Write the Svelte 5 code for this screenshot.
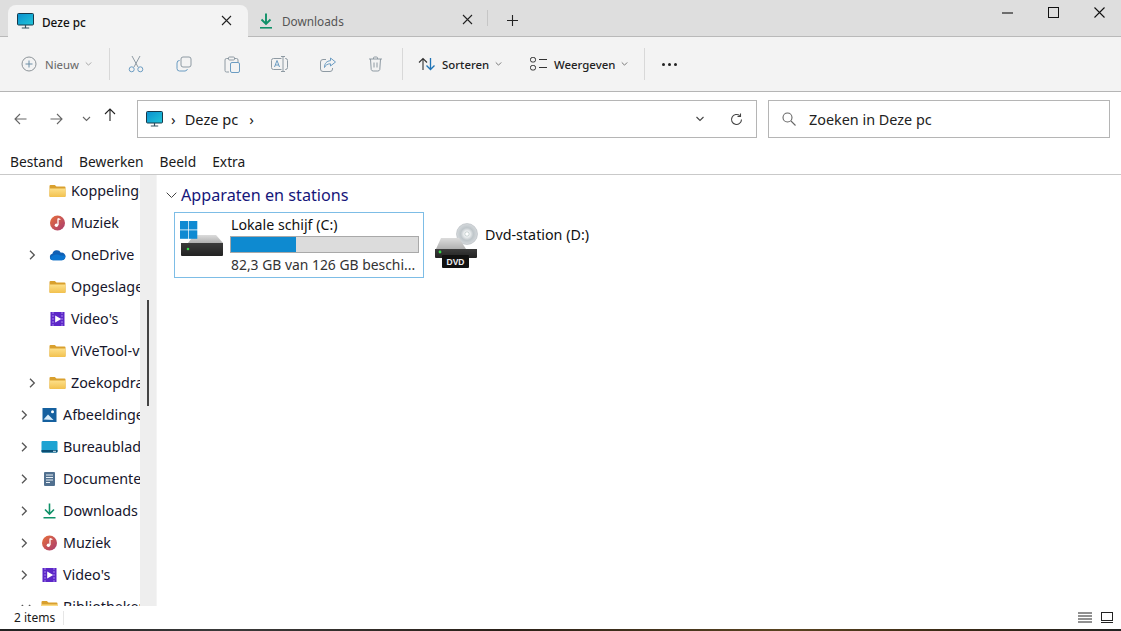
<script>
  const tree = [
    { label: 'Koppelingen', icon: 'folder', level: 2 },
    { label: 'Muziek', icon: 'music', level: 2 },
    { label: 'OneDrive', icon: 'cloud', level: 2, arrow: true },
    { label: 'Opgeslagen games', icon: 'folder', level: 2 },
    { label: "Video's", icon: 'video', level: 2 },
    { label: 'ViVeTool-v0.3', icon: 'folder', level: 2 },
    { label: 'Zoekopdrachten', icon: 'folder', level: 2, arrow: true },
    { label: 'Afbeeldingen', icon: 'pictures', level: 1, arrow: true },
    { label: 'Bureaublad', icon: 'desktop', level: 1, arrow: true },
    { label: 'Documenten', icon: 'docs', level: 1, arrow: true },
    { label: 'Downloads', icon: 'download', level: 1, arrow: true },
    { label: 'Muziek', icon: 'music', level: 1, arrow: true },
    { label: "Video's", icon: 'video', level: 1, arrow: true },
    { label: 'Bibliotheken', icon: 'folder', level: 1, open: true }
  ]
  const menu = ['Bestand', 'Bewerken', 'Beeld', 'Extra']
  let free = $state(82.3)
  let total = $state(126)
  let fill = $derived(((total - free) / total) * 100)
</script>

{#snippet monitor()}
  <svg width="17" height="16" viewBox="0 0 17 16">
    <rect x="0.5" y="0.5" width="16" height="11.5" rx="1" fill="url(#scr)" stroke="#17384a" />
    <path d="M8.5 12v2.6M4.8 15h7.4" stroke="#33505f" stroke-width="1.2" />
  </svg>
{/snippet}

{#snippet dl(w, h)}
  <svg width={w} height={h} viewBox="0 0 14 16">
    <path d="M7 0.5v10M2.5 6.5 7 11l4.5-4.5" fill="none" stroke="#0f9168" stroke-width="1.9" />
    <path d="M1 14.8h12" stroke="#0f9168" stroke-width="1.6" />
  </svg>
{/snippet}

{#snippet x()}
  <svg width="11" height="11" viewBox="0 0 11 11"><path d="M1 1l9 9M10 1l-9 9" stroke="#222" stroke-width="1.1" fill="none" /></svg>
{/snippet}

{#snippet chev(w = 9, color = '#777')}
  <svg width={w} height="6" viewBox="0 0 9 6"><path d="M1 1l3.5 3.5L8 1" fill="none" stroke={color} stroke-width="1.1" /></svg>
{/snippet}

{#snippet side(name)}
  <svg width="17" height="16" viewBox="0 0 17 16">
    {#if name === 'folder'}
      <path d="M0.5 3a1 1 0 0 1 1-1h4.300l1.700 1.600h8a1 1 0 0 1 1 1V13a1 1 0 0 1-1 1h-14a1 1 0 0 1-1-1z" fill="#d9a02e" />
      <path d="M0.5 5.500h16V13a1 1 0 0 1-1 1h-14a1 1 0 0 1-1-1z" fill="url(#fld)" />
    {:else if name === 'music'}
      <circle cx="8.500" cy="8" r="7.500" fill="url(#mus)" />
      <path d="M9 3.600v6.300M9 3.600l2.400.9" stroke="#fff" stroke-width="1.300" fill="none" />
      <circle cx="7.400" cy="10.200" r="1.700" fill="#fff" />
    {:else if name === 'cloud'}
      <path d="M4 13.200a3.300 3.300 0 0 1-.6-6.500 4.600 4.600 0 0 1 8.500-1 3.800 3.800 0 0 1 4.600 3.700c0 2.200-1.600 3.800-3.600 3.800z" fill="#0f5fb4" />
      <path d="M1 11.500c1-2.600 5-5 9-3.600 2.500.9 5 .3 6.400 1-.2 2.400-1.800 4.300-3.900 4.300H4C2.600 13.200 1.600 12.500 1 11.500z" fill="#0a74d0" />
    {:else if name === 'video'}
      <rect x="1.500" y="1" width="14" height="14" fill="#5c27c7" />
      <path d="M4 1v14M13 1v14" stroke="#a583ee" stroke-width="1" stroke-dasharray="2 1" />
      <path d="M6.200 4.500l6 3.500-6 3.500z" fill="#fff" />
    {:else if name === 'pictures'}
      <rect x="1.500" y="1" width="14" height="14" fill="#15609f" />
      <circle cx="11.500" cy="4.800" r="1.500" fill="#fff" />
      <path d="M2.500 12.500 7 7.500l5.500 5.500z" fill="#d8ecfa" />
    {:else if name === 'desktop'}
      <rect x="0.500" y="2" width="16" height="11.500" rx="1" fill="#1da3d2" />
      <path d="M0.500 11h16v1.500a1 1 0 0 1-1 1h-14a1 1 0 0 1-1-1z" fill="#0b4e73" />
      <path d="M12 12.300h3" stroke="#cfe6f1" />
    {:else if name === 'docs'}
      <rect x="3" y="1" width="11" height="14" rx="1" fill="#51708f" />
      <path d="M5 4h7M5 6.500h7M5 9h7M5 11.500h4" stroke="#e9f0f6" stroke-width="1" />
    {:else if name === 'download'}
      <svg x="1.500" width="14" height="16" viewBox="0 0 14 16">
        <path d="M7 0.500v10M2.500 6.500 7 11l4.500-4.500" fill="none" stroke="#0f9168" stroke-width="1.600" />
        <path d="M1 14.800h12" stroke="#0f9168" stroke-width="1.500" />
      </svg>
    {/if}
  </svg>
{/snippet}

<svg class="defs" width="0" height="0" aria-hidden="true">
  <defs>
    <linearGradient id="scr" x1="0" y1="0" x2="1" y2="1"><stop offset="0" stop-color="#0a8fcf" /><stop offset="1" stop-color="#22c6d8" /></linearGradient>
    <linearGradient id="fld" x1="0" y1="0" x2="0" y2="1"><stop offset="0" stop-color="#fde08a" /><stop offset="1" stop-color="#f2c14e" /></linearGradient>
    <linearGradient id="mus" x1="0" y1="0" x2="1" y2="1"><stop offset="0" stop-color="#e8703a" /><stop offset="1" stop-color="#a83a70" /></linearGradient>
    <linearGradient id="drv" x1="0" y1="0" x2="0" y2="1"><stop offset="0" stop-color="#dcdcdc" /><stop offset="1" stop-color="#b0b0b0" /></linearGradient>
    <linearGradient id="blk" x1="0" y1="0" x2="0" y2="1"><stop offset="0" stop-color="#3c3c3c" /><stop offset="1" stop-color="#222" /></linearGradient>
    <radialGradient id="disc"><stop offset="0.25" stop-color="#f2f4f5" /><stop offset="0.6" stop-color="#bfc6ca" /><stop offset="1" stop-color="#d6dadd" /></radialGradient>
  </defs>
</svg>

<div class="window">
  <header class="titlebar">
    <div class="tab active">
      <span class="tab-icon">{@render monitor()}</span>
      <span class="tab-label">Deze pc</span>
      <span class="tab-x">{@render x()}</span>
    </div>
    <div class="tab">
      <span class="tab-icon dl">{@render dl(14, 16)}</span>
      <span class="tab-label">Downloads</span>
      <span class="tab-x">{@render x()}</span>
    </div>
    <span class="tab-sep"></span>
    <span class="plus">
      <svg width="11" height="11" viewBox="0 0 11 11"><path d="M5.500 0v11M0 5.500h11" stroke="#222" stroke-width="1.100" /></svg>
    </span>
    <div class="win-buttons">
      <span><svg width="11" height="11" viewBox="0 0 11 11"><path d="M0 6h11" stroke="#111" stroke-width="1.100" /></svg></span>
      <span><svg width="11" height="11" viewBox="0 0 11 11"><rect x="0.500" y="0.500" width="10" height="10" fill="none" stroke="#111" /></svg></span>
      <span><svg width="11" height="11" viewBox="0 0 11 11"><path d="M0.500 0.500l10 10M10.500 0.500l-10 10" stroke="#111" stroke-width="1.100" /></svg></span>
    </div>
  </header>

  <div class="toolbar">
    <div class="new">
      <svg width="16" height="16" viewBox="0 0 16 16"><circle cx="8" cy="8" r="7" fill="none" stroke="#8d9499" /><path d="M8 4.500v7M4.500 8h7" stroke="#6d8ea6" /></svg>
      <span>Nieuw</span>
      {@render chev(7, '#999')}
    </div>
    <span class="sep"></span>
    <div class="actions">
      <svg width="16" height="18" viewBox="0 0 16 18"><path d="M4 1l6 11M12 1L6 12" fill="none" stroke="#8e9aa3" /><circle cx="3.700" cy="14.300" r="2.500" fill="none" stroke="#6b9cc2" /><circle cx="12.300" cy="14.300" r="2.500" fill="none" stroke="#6b9cc2" /></svg>
      <svg width="16" height="16" viewBox="0 0 16 16"><rect x="5" y="1" width="10" height="10" rx="2" fill="none" stroke="#8e9aa3" /><path d="M3.600 4.500A2.500 2.500 0 0 0 1 7v5.500A2.500 2.500 0 0 0 3.500 15H9a2.500 2.500 0 0 0 2.400-2" fill="none" stroke="#6b9cc2" /></svg>
      <svg width="16" height="17" viewBox="0 0 16 17"><path d="M4 2.500H2.500A1.500 1.500 0 0 0 1 4v10.500A1.500 1.500 0 0 0 2.500 16H5M11 2.500h1.500A1.500 1.500 0 0 1 14 4v2" fill="none" stroke="#8e9aa3" /><rect x="4.500" y="1" width="6" height="3" rx="1" fill="none" stroke="#8e9aa3" /><rect x="6.500" y="6.500" width="9" height="10" rx="1.500" fill="none" stroke="#6b9cc2" /></svg>
      <svg width="17" height="16" viewBox="0 0 17 16"><path d="M10.500 2.500h-8a2 2 0 0 0-2 2v7a2 2 0 0 0 2 2h8M14 2.500h.5a2 2 0 0 1 2 2v7a2 2 0 0 1-2 2H14M10 .5h4M10 15.500h4M12 .5v15" fill="none" stroke="#8e9aa3" /><path d="M3.500 11l2.500-6.500L8.500 11M4.300 9h3.400" fill="none" stroke="#6b9cc2" /></svg>
      <svg width="16" height="15" viewBox="0 0 16 15"><path d="M6 2.500H3A2.500 2.500 0 0 0 .5 5v7A2.500 2.500 0 0 0 3 14.500h7a2.500 2.500 0 0 0 2.500-2.500v-1" fill="none" stroke="#8e9aa3" /><path d="M10.500 1l5 4-5 4V6.800C7.500 6.800 5.500 8 4.500 10.500c0-4 2-6.500 6-6.800z" fill="none" stroke="#6b9cc2" /></svg>
      <svg width="15" height="16" viewBox="0 0 15 16"><path d="M1 3h13M5.500 3V2a1 1 0 0 1 1-1h2a1 1 0 0 1 1 1v1M2.500 3l.7 10.500a2 2 0 0 0 2 1.500h4.600a2 2 0 0 0 2-1.500L12.500 3M6 6.500v5M9 6.500v5" fill="none" stroke="#8e9aa3" /></svg>
    </div>
    <span class="sep"></span>
    <div class="tool sort">
      <svg width="18" height="14" viewBox="0 0 18 14"><path d="M5 13V1.500M1 5.500l4-4 4 4" fill="none" stroke="#333" stroke-width="1.100" /><path d="M12.500 1v11.500M8.500 8.500l4 4 4-4" fill="none" stroke="#1e73b5" stroke-width="1.300" /></svg>
      <span>Sorteren</span>
      {@render chev(7, '#666')}
    </div>
    <div class="tool view">
      <svg width="17" height="14" viewBox="0 0 17 14"><rect x="0.500" y="0.500" width="5" height="4.500" rx="1.800" fill="none" stroke="#333" /><rect x="0.500" y="8.500" width="5" height="4.500" rx="1.800" fill="none" stroke="#333" /><path d="M9 2.500h8M9 10.500h8" stroke="#333" /></svg>
      <span>Weergeven</span>
      {@render chev(7, '#666')}
    </div>
    <span class="sep last"></span>
    <div class="dots"><i></i><i></i><i></i></div>
  </div>

  <div class="addressrow">
    <div class="nav">
      <svg width="13" height="12" viewBox="0 0 13 12"><path d="M12.500 6H1M6 1 1 6l5 5" fill="none" stroke="#666" stroke-width="1.100" /></svg>
      <svg class="fwd" width="13" height="12" viewBox="0 0 13 12"><path d="M.5 6H12M7 1l5 5-5 5" fill="none" stroke="#666" stroke-width="1.100" /></svg>
      <span class="hist">{@render chev(9, '#666')}</span>
      <svg class="up" width="12" height="13" viewBox="0 0 12 13"><path d="M6 13V1M1 6l5-5 5 5" fill="none" stroke="#222" stroke-width="1.100" /></svg>
    </div>
    <div class="address">
      {@render monitor()}
      <span class="crumb-sep first">›</span>
      <span class="crumb">Deze pc</span>
      <span class="crumb-sep">›</span>
      <span class="grow"></span>
      {@render chev(10, '#444')}
      <svg class="refresh" width="13" height="13" viewBox="0 0 13 13"><path d="M11.500 6.500A5 5 0 1 1 9.800 2.700" fill="none" stroke="#444" stroke-width="1.100" /><path d="M10.500.5v3h-3" fill="none" stroke="#444" stroke-width="1.100" /></svg>
    </div>
    <div class="search">
      <svg width="14" height="14" viewBox="0 0 14 14"><circle cx="5.500" cy="5.500" r="4.500" fill="none" stroke="#666" stroke-width="1.100" /><path d="M9 9l4.500 4.500" stroke="#666" stroke-width="1.100" /></svg>
      <span>Zoeken in Deze pc</span>
    </div>
  </div>

  <nav class="menubar">
    {#each menu as item}
      <span>{item}</span>
    {/each}
  </nav>

  <div class="body">
    <aside class="tree">
      {#each tree as row}
        <div class="row" class:l2={row.level === 2}>
          <span class="arrow">
            {#if row.arrow}
              <svg width="7" height="10" viewBox="0 0 7 10"><path d="M1 .8 5.300 5 1 9.200" fill="none" stroke="#555" stroke-width="1.300" /></svg>
            {:else if row.open}
              <svg width="10" height="7" viewBox="0 0 10 7"><path d="M.8 1 5 5.300 9.200 1" fill="none" stroke="#555" stroke-width="1.300" /></svg>
            {/if}
          </span>
          {@render side(row.icon)}
          <span class="row-label">{row.label}</span>
        </div>
      {/each}
    </aside>
    <div class="scroll"><span class="thumb"></span></div>

    <main class="content">
      <h2>
        <svg width="11" height="7" viewBox="0 0 11 7"><path d="M.7.700l4.800 4.800L10.300.7" fill="none" stroke="#444" stroke-width="1" /></svg>
        Apparaten en stations
      </h2>
      <div class="drives">
        <div class="drive selected">
          <svg class="hdd" width="44" height="36" viewBox="0 0 44 36">
            <path d="M8 22 14 14h22l7 8z" fill="url(#drv)" />
            <g fill="#0f8ad2">
              <rect x="0" y="0" width="8.300" height="8.500" /><rect x="9" y="0" width="8.300" height="8.500" />
              <rect x="0" y="9.300" width="8.300" height="8.500" /><rect x="9" y="9.300" width="8.300" height="8.500" />
            </g>
            <path d="M1 22h42v12a1 1 0 0 1-1 1H2a1 1 0 0 1-1-1z" fill="url(#blk)" />
            <circle cx="8" cy="28" r="1.300" fill="#38d84a" />
          </svg>
          <div class="drive-info">
            <div class="drive-name">Lokale schijf (C:)</div>
            <div class="bar"><span style="width: {fill}%"></span></div>
            <div class="drive-size">{String(free).replace('.', ',')} GB van {total} GB beschi...</div>
          </div>
        </div>
        <div class="drive dvd">
          <svg width="44" height="47" viewBox="0 0 44 47">
            <circle cx="33" cy="12" r="10.500" fill="url(#disc)" stroke="#b3b9bd" stroke-width="0.600" />
            <circle cx="33" cy="12" r="2.200" fill="#fff" stroke="#99aaaa" stroke-width="0.500" />
            <path d="M2 27 7 16h18l7 11z" fill="url(#drv)" />
            <path d="M1 27h42v8a1 1 0 0 1-1 1H2a1 1 0 0 1-1-1z" fill="url(#blk)" />
            <circle cx="6" cy="30" r="1.400" fill="#38d84a" />
            <rect x="8" y="33" width="27" height="13" rx="1" fill="#111" />
            <text x="21.500" y="42.500" text-anchor="middle" font-size="8.500" font-weight="700" fill="#eee" font-family="Liberation Sans, sans-serif">DVD</text>
          </svg>
          <div class="drive-name">Dvd-station (D:)</div>
        </div>
      </div>
    </main>
  </div>

  <footer class="status">
    <span class="count">2 items</span>
    <span class="count-sep"></span>
    <span class="grow"></span>
    <svg width="14" height="11" viewBox="0 0 14 11"><path d="M0 1h14M0 4h14M0 7h14M0 10h14" stroke="#222" /></svg>
    <svg width="12" height="11" viewBox="0 0 12 11"><rect x="0.500" y="0.500" width="11" height="8" fill="none" stroke="#222" /><path d="M0 10.500h12" stroke="#222" /></svg>
  </footer>
  <div class="strip"></div>
</div>

<style>
  :global(body) {
    margin: 0;
    background: #fff;
  }

  .defs {
    position: absolute;
  }

  .window {
    display: flex;
    flex-direction: column;
    width: 1121px;
    height: 631px;
    overflow: hidden;
    font-family: 'Noto Sans', 'Open Sans', sans-serif;
    color: #1a1a1a;
  }

  svg {
    display: block;
    flex: none;
  }

  .grow {
    flex: 1;
  }

  .titlebar {
    display: flex;
    align-items: flex-end;
    box-sizing: border-box;
    height: 37px;
    padding-left: 8px;
    background: #dedede;
    border-bottom: 1px solid #b9b9b9;
  }

  .tab {
    display: flex;
    align-items: center;
    box-sizing: border-box;
    width: 240px;
    height: 31px;
    padding-left: 9px;
    font-size: 11.8px;
    color: #555;
  }

  .tab.active {
    margin-bottom: -1px;
    height: 32px;
    border-radius: 8px 8px 0 0;
    background: #f3f3f3;
    color: #111;
    font-weight: 500;
  }

  .tab.active .tab-x {
    margin-left: auto;
    margin-right: 16px;
  }

  .tab-label {
    margin-top: 1px;
  }

  .tab-icon {
    width: 25px;
  }

  .tab-icon.dl {
    margin-left: 2px;
    width: 23px;
  }

  .tab-x {
    margin-left: auto;
    margin-right: 15px;
    margin-top: -2px;
  }

  .tab-sep {
    width: 1px;
    height: 16px;
    margin: 0 19px 10px -1px;
    background: #c6c6c6;
  }

  .plus {
    margin-bottom: 10px;
  }

  .win-buttons {
    display: flex;
    align-self: flex-start;
    gap: 35px;
    margin-left: auto;
    margin-right: 16px;
    padding-top: 7px;
  }

  .toolbar {
    display: flex;
    align-items: center;
    box-sizing: border-box;
    height: 55px;
    background: #f3f3f3;
    border-bottom: 1px solid #b5b5b5;
  }

  .new {
    display: flex;
    align-items: center;
    width: 109px;
    padding-left: 21px;
    box-sizing: border-box;
    font-size: 11.4px;
    color: #666;
  }

  .new span {
    margin: 0 6px 0 8px;
  }

  .sep {
    width: 1px;
    height: 32px;
    background: #d8d8d8;
  }

  .actions {
    display: flex;
    align-items: center;
    justify-content: space-between;
    width: 292px;
    box-sizing: border-box;
    padding: 0 19px 0 18px;
  }

  .tool {
    display: flex;
    align-items: center;
    font-size: 11.4px;
    font-weight: 500;
    color: #222;
  }

  .tool span {
    margin: 0 6px 0 6px;
  }

  .sort {
    margin-left: 15px;
    width: 112px;
  }

  .view {
    width: 115px;
  }

  .view span {
    margin-left: 7px;
  }

  .sep.last {
    margin-left: -1px;
  }

  .dots {
    display: flex;
    gap: 3px;
    margin-left: 17px;
  }

  .dots i {
    width: 3px;
    height: 3px;
    border-radius: 50%;
    background: #222;
  }

  .addressrow {
    display: flex;
    align-items: center;
    box-sizing: border-box;
    height: 56px;
    background: #fff;
    padding-bottom: 2px;
  }

  .nav {
    display: flex;
    align-items: center;
    width: 137px;
    box-sizing: border-box;
    padding-left: 14px;
  }

  .fwd {
    margin-left: 23px;
  }

  .hist {
    margin-left: 19px;
  }

  .nav .up {
    margin: -10px 0 0 13px;
  }

  .address,
  .search {
    display: flex;
    align-items: center;
    box-sizing: border-box;
    height: 38px;
    border: 1px solid #b5b5b5;
    background: #fff;
  }

  .address {
    width: 620px;
    padding: 0 13px 0 8px;
    margin-right: 11px;
  }

  .crumb {
    font-size: 14.6px;
    color: #1a1a1a;
    margin: 0 11px 0 9px;
  }

  .crumb-sep {
    font-size: 15px;
    color: #222;
  }

  .crumb-sep.first {
    margin-left: 8px;
  }

  .refresh {
    margin-left: 25px;
  }

  .search {
    width: 342px;
    padding-left: 13px;
    font-size: 14.4px;
    color: #222;
    gap: 13px;
  }

  .menubar {
    display: flex;
    gap: 16px;
    box-sizing: border-box;
    height: 27px;
    padding: 5px 0 0 10px;
    font-size: 13.8px;
    line-height: 18px;
    border-bottom: 1px solid #c9c9c9;
  }

  .body {
    display: flex;
    height: 431px;
    overflow: hidden;
  }

  .tree {
    width: 140px;
    overflow: hidden;
    flex: none;
  }

  .row {
    display: flex;
    align-items: center;
    height: 32px;
    font-size: 14.3px;
    white-space: nowrap;
    color: #16162c;
    padding-left: 21px;
  }

  .row.l2 {
    padding-left: 29px;
  }

  .arrow {
    display: flex;
    width: 20px;
    flex: none;
  }

  .row-label {
    margin: 0 0 1px 5px;
  }

  .scroll {
    flex: none;
    width: 16px;
    background: #eeeeee;
    border-right: 1px solid #f4f4f4;
    display: flex;
    justify-content: center;
  }

  .thumb {
    width: 2px;
    height: 106px;
    margin-top: 125px;
    background: #444;
  }

  .content {
    flex: 1;
    padding: 8px 0 0 9px;
  }

  h2 {
    display: flex;
    align-items: center;
    gap: 4px;
    margin: 0;
    font-size: 16.2px;
    font-weight: 400;
    line-height: 24px;
    color: #16167a;
  }

  .drives {
    display: flex;
    align-items: center;
    gap: 10px;
    margin: 5px 0 0 8px;
  }

  .drive {
    display: flex;
    align-items: center;
    box-sizing: border-box;
  }

  .selected {
    width: 250px;
    height: 66px;
    padding-left: 5px;
    gap: 7px;
    border: 1px solid #7dbde6;
  }

  .hdd {
    align-self: flex-start;
    margin-top: 8px;
  }

  .dvd {
    gap: 7px;
    align-items: flex-start;
    height: 47px;
  }

  .dvd .drive-name {
    margin-top: 3px;
    font-size: 14.3px;
  }

  .drive-info {
    width: 188px;
    margin-top: -1px;
  }

  .drive-name {
    font-size: 14.2px;
    line-height: 20px;
    color: #111;
  }

  .bar {
    box-sizing: border-box;
    height: 17px;
    margin: 1px 0 2px -1px;
    border: 1px solid #a9a9a9;
    background: #dcdcdc;
  }

  .bar span {
    display: block;
    height: 100%;
    background: #0e8ad0;
  }

  .drive-size {
    font-size: 13.9px;
    line-height: 20px;
    color: #333;
    white-space: nowrap;
  }

  .status {
    display: flex;
    align-items: center;
    box-sizing: border-box;
    height: 23px;
    gap: 9px;
    padding: 0 8px 0 14px;
    font-size: 12px;
    background: #fff;
  }

  .count-sep {
    width: 1px;
    height: 14px;
    background: #e6e6e6;
    margin-left: -1px;
  }

  .strip {
    height: 2px;
    background: linear-gradient(90deg, #222 0, #3a3a3a 20%, #2a2018 45%, #5a4420 70%, #3a2a15 85%, #222);
  }
</style>
